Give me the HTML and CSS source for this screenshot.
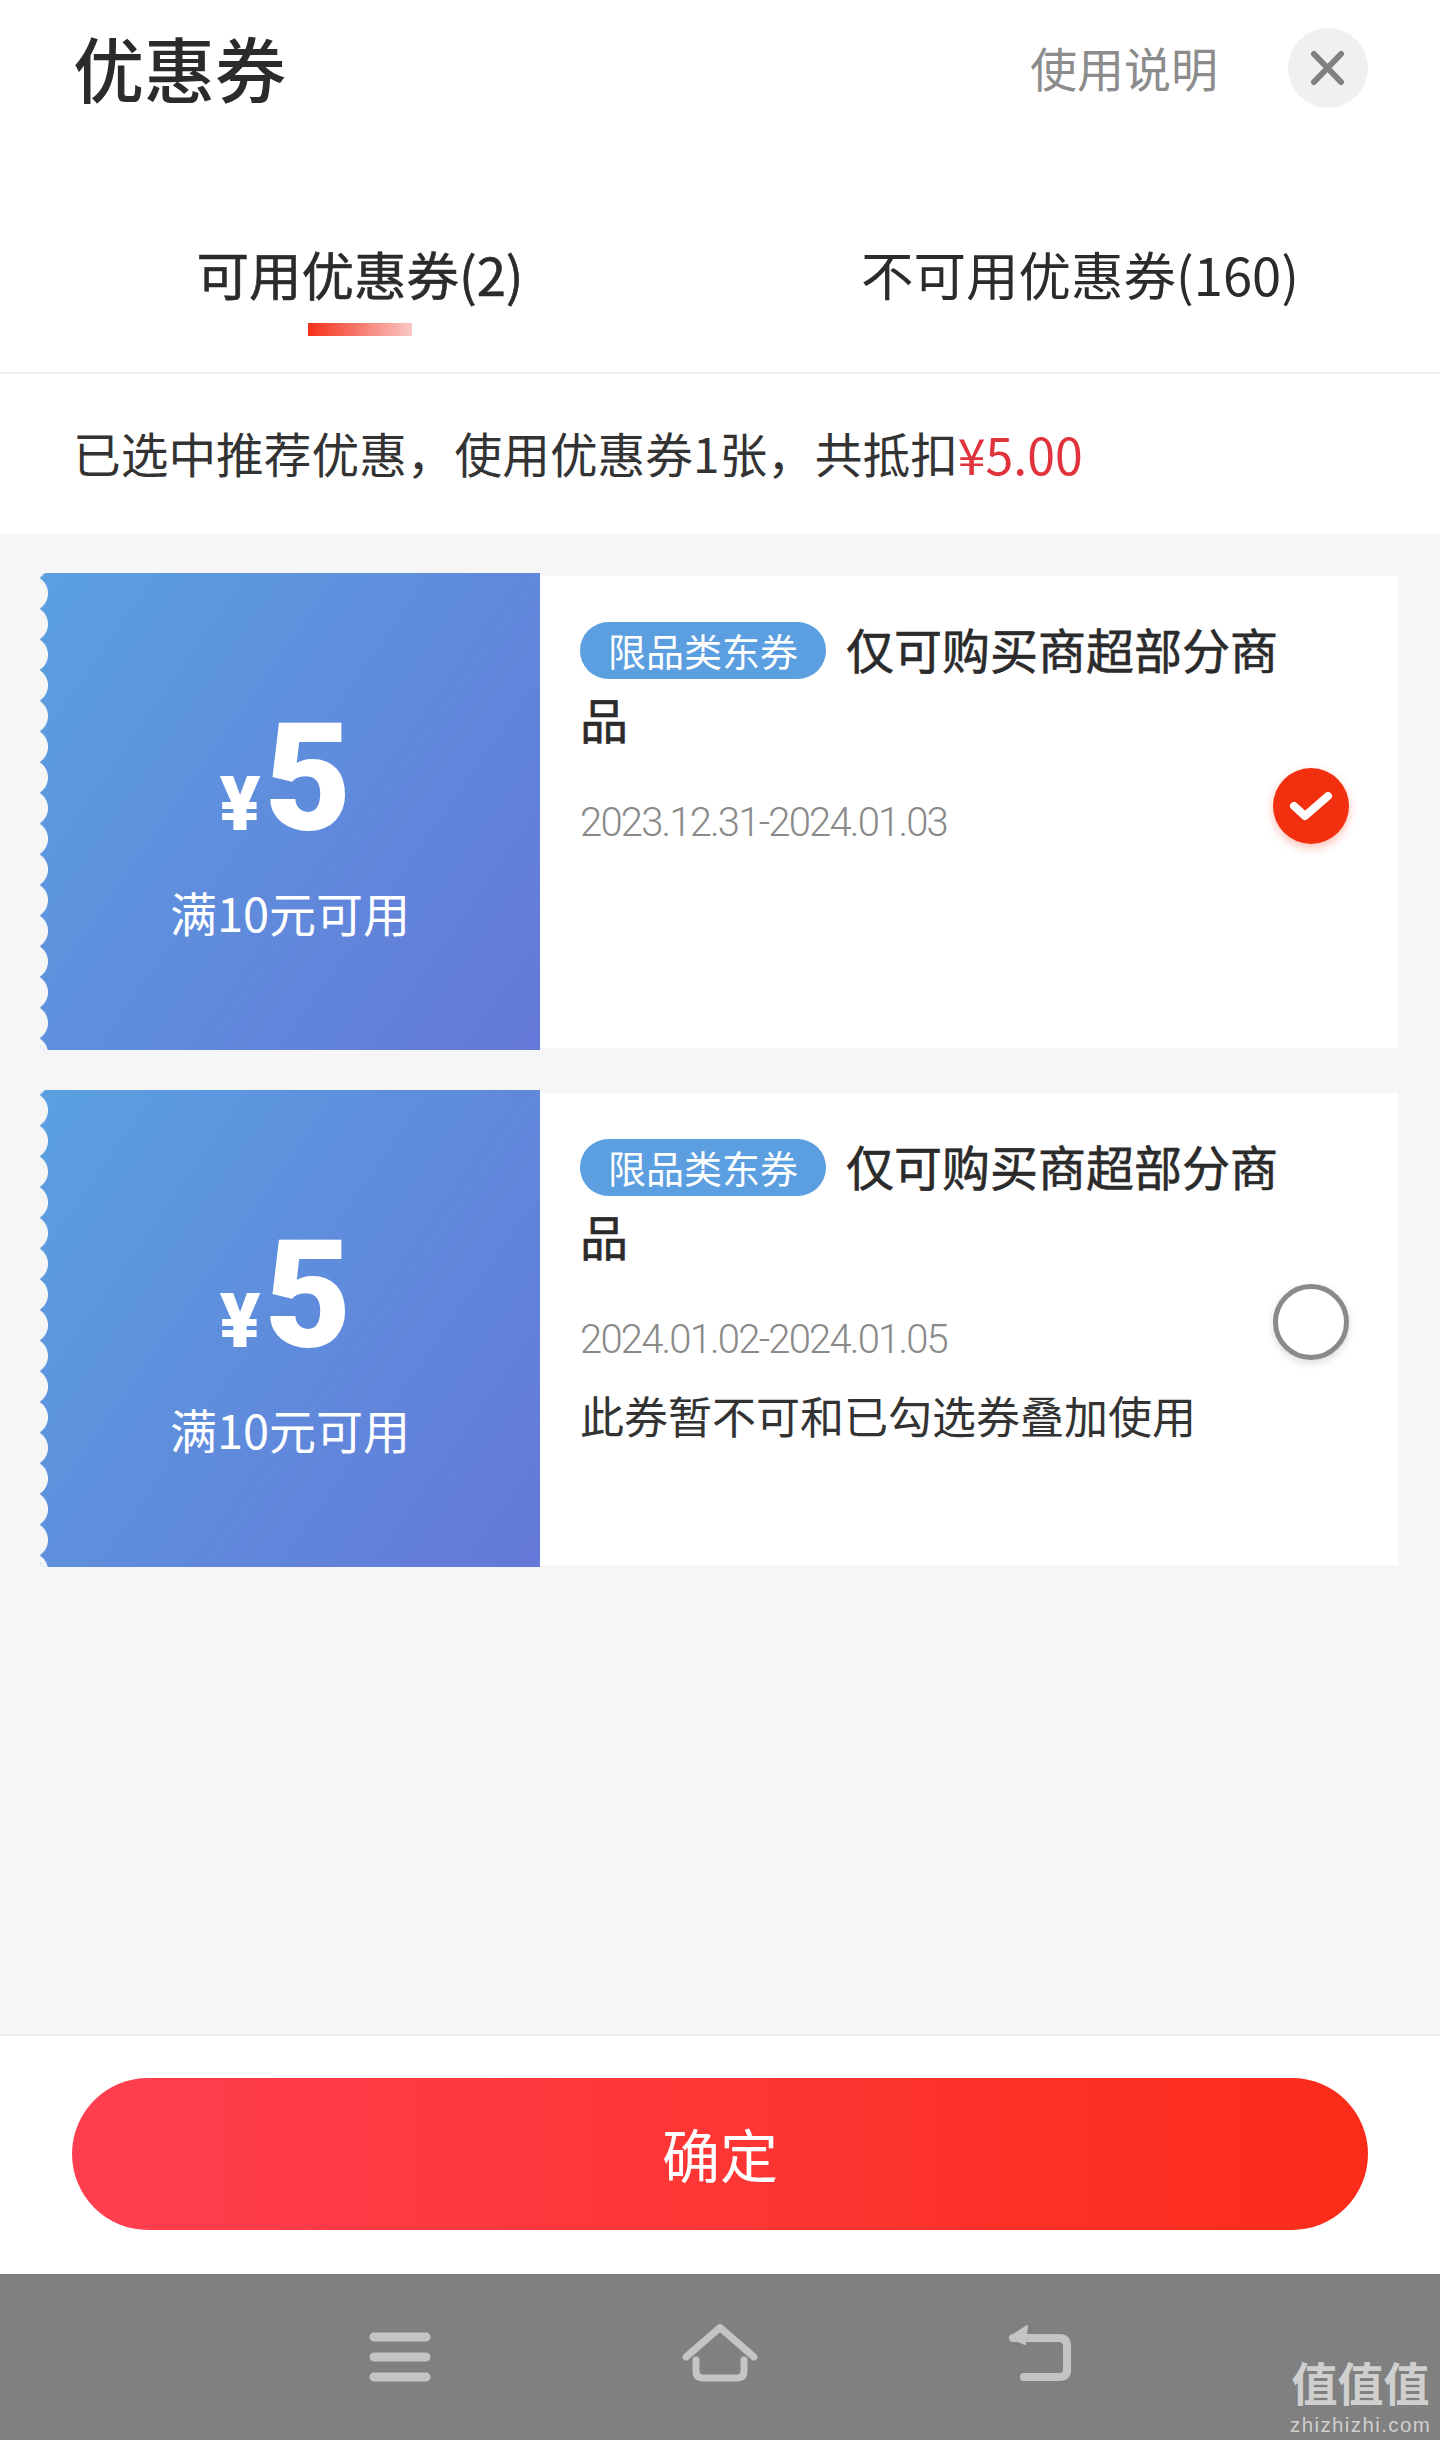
FILE: index.html
```html
<!DOCTYPE html>
<html lang="zh-CN">
<head>
    <meta charset="UTF-8">
    <meta name="viewport" content="width=device-width, initial-scale=1.0">
    <title>优惠券</title>
    <link rel="stylesheet" href="styles.css">
</head>
<body>
    <div class="page">
        <header class="header">
            <h1 class="title">优惠券</h1>
            <a class="help">使用说明</a>
            <button class="close" type="button">
                <svg width="36" height="36" viewBox="0 0 36 36"><path d="M4 4L31 32M31 4L4 32" fill="none" stroke="#808080" stroke-width="6" stroke-linecap="round"/></svg>
            </button>
        </header>

        <nav class="tabs">
            <div class="tab active">可用优惠券(2)</div>
            <div class="tab">不可用优惠券(160)</div>
        </nav>

        <div class="summary">已选中推荐优惠，使用优惠券1张，共抵扣<span class="price">¥5.00</span></div>

        <main class="list">
            <section class="coupon">
                <div class="ticket">
                    <div class="amount"><span class="yen">¥</span><span class="num">5</span></div>
                    <div class="rule">满10元可用</div>
                </div>
                <div class="detail">
                    <div class="name"><span class="tag">限品类东券</span>仅可购买商超部分商品</div>
                    <div class="date">2023.12.31-2024.01.03</div>
                    <div class="check checked">
                        <svg width="46" height="34" viewBox="0 0 46 34"><path d="M6 17L17 27L40 7" fill="none" stroke="#fff" stroke-width="8" stroke-linecap="round" stroke-linejoin="round"/></svg>
                    </div>
                </div>
            </section>

            <section class="coupon">
                <div class="ticket">
                    <div class="amount"><span class="yen">¥</span><span class="num">5</span></div>
                    <div class="rule">满10元可用</div>
                </div>
                <div class="detail">
                    <div class="name"><span class="tag">限品类东券</span>仅可购买商超部分商品</div>
                    <div class="date">2024.01.02-2024.01.05</div>
                    <div class="note">此券暂不可和已勾选券叠加使用</div>
                    <div class="check"></div>
                </div>
            </section>
        </main>

        <footer class="footer">
            <button class="confirm" type="button">确定</button>
        </footer>

        <div class="navbar">
            <svg class="nav-icon" width="62" height="50" viewBox="0 0 62 50"><path d="M5 5H57M5 25H57M5 45H57" fill="none" stroke="#c4c4c4" stroke-width="9" stroke-linecap="round"/></svg>
            <svg class="nav-icon" width="78" height="58" viewBox="0 0 78 58"><path d="M5 33L39 3.5L73 33M15 36V47Q15 54 22 54H56Q63 54 63 47V36" fill="none" stroke="#c4c4c4" stroke-width="7" stroke-linecap="round" stroke-linejoin="round"/></svg>
            <svg class="nav-icon" width="66" height="58" viewBox="0 0 66 58"><path d="M6 14H52Q60 14 60 22V46Q60 53 52 53H17" fill="none" stroke="#c4c4c4" stroke-width="8" stroke-linecap="round" stroke-linejoin="round"/><path d="M20 2L3 13L18 20Z" fill="#c4c4c4" stroke="#c4c4c4" stroke-width="2" stroke-linejoin="round"/></svg>
        </div>

        <div class="watermark">
            <div class="wm-cn">值值值</div>
            <div class="wm-en">zhizhizhi.com</div>
        </div>
    </div>
</body>
</html>
```

FILE: styles.css
```css
* {
    box-sizing: border-box;
}

body {
    margin: 0;
    font-family: "Noto Sans CJK SC", sans-serif;
    color: #2b2b2b;
    background: #fff;
}

.page {
    position: relative;
    width: 1440px;
    height: 2440px;
    display: flex;
    flex-direction: column;
    overflow: hidden;
}

/* header */
.header {
    height: 135px;
    display: flex;
    align-items: center;
    padding: 0 72px 0 73px;
}

.title {
    margin: 0 0 3px;
    font-size: 71px;
    font-weight: 500;
    line-height: 1;
    flex: 1;
}

.help {
    font-size: 47px;
    line-height: 1;
    color: #8c8c8c;
    margin: 0 70px 3px 0;
}

.close {
    width: 80px;
    height: 80px;
    border: none;
    border-radius: 50%;
    background: #f0f0f0;
    padding: 0;
    display: flex;
    align-items: center;
    justify-content: center;
}

/* tabs */
.tabs {
    height: 239px;
    display: grid;
    grid-template-columns: 1fr 1fr;
    border-bottom: 2px solid #f0f0f0;
    padding-top: 106px;
}

.tab {
    position: relative;
    font-size: 52.5px;
    line-height: 64px;
    height: 64px;
    text-align: center;
}

.tab.active {
    -webkit-text-stroke: 0.6px #2b2b2b;
}

.tab.active::after {
    content: "";
    position: absolute;
    left: 308px;
    top: 82px;
    width: 104px;
    height: 13px;
    background: linear-gradient(90deg, #f5301a, #f9c8c4);
}

.summary {
    height: 160px;
    display: flex;
    align-items: center;
    padding: 0 0 3px 73px;
    font-size: 47.7px;
    color: #333;
}

.price {
    color: #e0333c;
    font-size: 50px;
}

/* coupons */
.list {
    flex: 1;
    background: #f6f6f6;
    padding: 39px 42px 0 40px;
    display: flex;
    flex-direction: column;
    gap: 40px;
}

.coupon {
    height: 477px;
    display: flex;
    align-items: center;
}

.ticket {
    position: relative;
    width: 500px;
    height: 477px;
    background: linear-gradient(125deg, #5aa0e0, #6478d8);
    border-radius: 6px 0 0 6px;
    color: #fff;
    padding-top: 141px;
    text-align: center;
    overflow: hidden;
}

/* scalloped left edge */
.ticket::before {
    content: "";
    position: absolute;
    left: 0;
    top: 0;
    bottom: 0;
    width: 9px;
    background: radial-gradient(circle at -10px 50%, #f6f6f6 17.5px, transparent 18.5px) 0 5px / 9px 30.7px repeat-y;
}

.amount {
    display: flex;
    justify-content: center;
    align-items: baseline;
    height: 130px;
    padding-right: 9px;
    font-family: Roboto, sans-serif;
    font-weight: 900;
    line-height: 130px;
}

.yen {
    font-size: 76px;
    margin-right: 4px;
}

.num {
    font-size: 150px;
}

.rule {
    margin-top: 38px;
    font-size: 47px;
    line-height: 60px;
}

.detail {
    position: relative;
    flex: 1;
    height: 472px;
    background: #fff;
    padding: 37px 98px 0 40px;
}

.name {
    font-size: 48px;
    line-height: 70px;
    -webkit-text-stroke: 0.6px #2b2b2b;
}

.tag {
    display: inline-block;
    height: 57px;
    line-height: 55px;
    padding: 0 28px;
    margin-right: 20px;
    border-radius: 29px;
    background: #5b9fe0;
    color: #fff;
    font-size: 38px;
    -webkit-text-stroke: 0;
    vertical-align: 3px;
}

.date {
    margin-top: 45px;
    font-family: Roboto, sans-serif;
    font-weight: 300;
    font-size: 40px;
    letter-spacing: -1.8px;
    line-height: 50px;
    color: #8a8a8a;
}

.note {
    margin-top: 22px;
    font-size: 44px;
    line-height: 56px;
    color: #333;
}

.check {
    position: absolute;
    right: 49px;
    top: 191px;
    width: 76px;
    height: 76px;
    border-radius: 50%;
    background: #fff;
    border: 5px solid #8a8a8a;
    box-shadow: 0 3px 8px rgba(0, 0, 0, 0.15);
    display: flex;
    align-items: center;
    justify-content: center;
}

.check.checked {
    top: 192px;
    background: #f2300f;
    border: none;
    box-shadow: 0 4px 10px rgba(242, 48, 15, 0.3);
}

/* bottom */
.footer {
    height: 240px;
    border-top: 2px solid #eee;
    padding: 42px 72px 0;
}

.confirm {
    width: 100%;
    height: 152px;
    border: none;
    border-radius: 76px;
    background: linear-gradient(90deg, #ff3f50, #fb2c19);
    color: #fff;
    font-family: inherit;
    font-size: 58px;
    padding: 0 0 2px;
}

.navbar {
    height: 166px;
    background: #808080;
    display: grid;
    grid-template-columns: repeat(3, 320px);
    padding: 0 240px 58px;
    align-items: end;
    justify-items: center;
}

.watermark {
    position: absolute;
    right: 9px;
    bottom: 3px;
    width: 141px;
    color: #cfcfcf;
    text-align: center;
}

.wm-cn {
    font-size: 46px;
    font-weight: 700;
    line-height: 50px;
    margin-bottom: 7px;
    white-space: nowrap;
}

.wm-en {
    font-family: "Liberation Sans", sans-serif;
    font-size: 20.5px;
    letter-spacing: 1.4px;
    line-height: 24px;
    white-space: nowrap;
}
```
